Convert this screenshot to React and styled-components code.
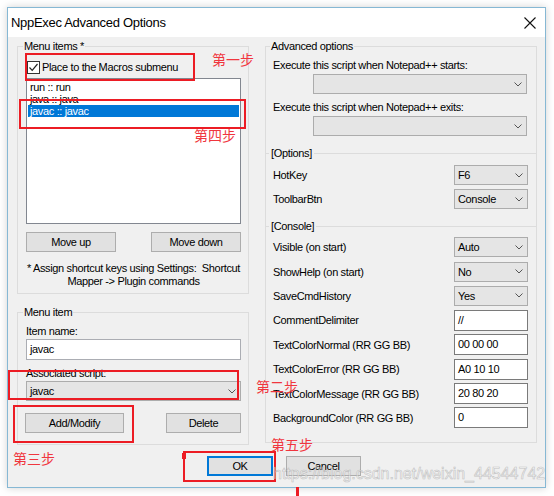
import React from "react";
import styled, { createGlobalStyle } from "styled-components";

const GlobalStyle = createGlobalStyle`
  html, body {
    margin: 0;
    background: #ffffff;
  }
  body {
    font-family: "Liberation Sans", Arial, sans-serif;
  }
`;

const Page = styled.div`
  position: relative;
  width: 554px;
  height: 496px;
  overflow: hidden;
  background: #ffffff;
`;

const Window = styled.div`
  margin: 7px 0 0 7px;
  width: 539px;
  height: 481px;
  box-sizing: border-box;
  border: 1px solid #86b8d4;
  background: #f0f0f0;
  box-shadow: 0 0 8px rgba(0, 0, 0, 0.18);
  display: flex;
  flex-direction: column;
  font-size: 11px;
  letter-spacing: -0.35px;
  color: #000;
`;

const TitleBar = styled.div`
  height: 29px;
  flex-shrink: 0;
  background: #ffffff;
  display: flex;
  align-items: center;
  justify-content: space-between;
  padding: 0 9px 0 3px;
`;

const Title = styled.div`
  font-size: 13px;
  letter-spacing: -0.3px;
`;

const Body = styled.div`
  padding: 3px 0 0 9px;
  display: flex;
  flex-direction: column;
`;

const Columns = styled.div`
  display: grid;
  grid-template-columns: 232px 272px;
  column-gap: 16px;
  align-items: start;
`;

const Column = styled.div`
  display: flex;
  flex-direction: column;
  gap: 12px;
`;

const Group = styled.fieldset`
  margin: 0;
  min-inline-size: 0;
  box-sizing: border-box;
  height: ${(p) => p.$h}px;
  border: 1px solid #dcdcdc;
  padding: ${(p) => p.$pad || "0 7px 0 8px"};
  display: flex;
  flex-direction: column;
`;

const Legend = styled.legend`
  padding: 0 1px;
  margin-left: ${(p) => p.$ml || -3}px;
  line-height: 13px;
`;

const CheckRow = styled.label`
  display: flex;
  align-items: center;
  gap: 2px;
  height: 14px;
  margin: 7px 0 0 1px;
`;

const CheckBox = styled.span`
  width: 13px;
  height: 13px;
  box-sizing: border-box;
  border: 1px solid #333;
  background: #fff;
  display: flex;
  align-items: center;
  justify-content: center;
`;

const ListBox = styled.div`
  margin-top: 4px;
  height: 146px;
  box-sizing: border-box;
  border: 1px solid #828790;
  background: #fff;
  padding: 1px 1px;
`;

const ListRow = styled.div`
  height: 12px;
  line-height: 12px;
  padding-left: 2px;
  background: ${(p) => (p.$selected ? "#0078d7" : "transparent")};
  color: ${(p) => (p.$selected ? "#fff" : "#000")};
  &:first-child {
    margin-top: 1px;
  }
`;

const ButtonRow = styled.div`
  display: flex;
  justify-content: ${(p) => p.$justify || "space-between"};
  gap: ${(p) => p.$gap || 0}px;
  margin-top: ${(p) => p.$mt || 0}px;
  padding-left: ${(p) => p.$pl || 0}px;
`;

const Button = styled.button`
  width: ${(p) => p.$w}px;
  height: 20px;
  box-sizing: border-box;
  border: 1px solid ${(p) => (p.$focused ? "#0078d7" : "#adadad")};
  box-shadow: ${(p) => (p.$focused ? "inset 0 0 0 1px #0078d7" : "none")};
  background: #e1e1e1;
  font-family: inherit;
  font-size: 11px;
  letter-spacing: -0.35px;
  color: #000;
  padding: 0;
`;

const Note = styled.div`
  margin-top: 10px;
  text-align: center;
  line-height: 13px;
  white-space: pre;
`;

const FieldLabel = styled.div`
  line-height: 13px;
  margin-top: ${(p) => p.$mt || 0}px;
`;

const TextInput = styled.div`
  box-sizing: border-box;
  width: ${(p) => p.$w || "100%"};
  height: 21px;
  margin-top: ${(p) => p.$mt || 0}px;
  border: 1px solid ${(p) => p.$border || "#abadb3"};
  background: #fff;
  padding: ${(p) => p.$pad || "0 3px"};
  line-height: ${(p) => p.$lh || 19}px;
  flex-shrink: 0;
`;

const Combo = styled.div`
  box-sizing: border-box;
  width: ${(p) => p.$w || "100%"};
  height: 20px;
  margin: ${(p) => p.$m || "0"};
  border: 1px solid #acacac;
  background: #e5e5e5;
  display: flex;
  align-items: center;
  justify-content: space-between;
  padding: 0 4px 0 3px;
  flex-shrink: 0;
`;

const Section = styled.div`
  display: flex;
  align-items: center;
  gap: 2px;
  margin: ${(p) => p.$m};
  margin-left: -7px;
  margin-right: -8px;
  line-height: 13px;
  &::before {
    content: "";
    width: 3px;
    border-top: 1px solid #dcdcdc;
  }
  &::after {
    content: "";
    flex: 1;
    border-top: 1px solid #dcdcdc;
  }
`;

const OptionRow = styled.div`
  display: flex;
  align-items: center;
  justify-content: space-between;
  height: ${(p) => p.$h || 24.4}px;
  flex-shrink: 0;
  margin-top: ${(p) => p.$mt || 0}px;
`;

const Mark = styled.div`
  position: absolute;
  left: ${(p) => p.$x}px;
  top: ${(p) => p.$y}px;
  width: ${(p) => p.$w}px;
  height: ${(p) => p.$h}px;
  box-sizing: border-box;
  border: ${(p) => (p.$solid ? "none" : "2px solid #ec1c24")};
  background: ${(p) => (p.$solid ? "#ec1c24" : "transparent")};
  pointer-events: none;
`;

const Step = styled.div`
  position: absolute;
  left: ${(p) => p.$x}px;
  top: ${(p) => p.$y}px;
  font-family: "Noto Sans CJK SC", sans-serif;
  font-size: 14px;
  line-height: 16px;
  color: #f0363e;
  pointer-events: none;
`;

const Watermark = styled.div`
  position: absolute;
  left: 273px;
  top: 465px;
  font-family: "Liberation Sans", Arial, sans-serif;
  font-size: 16px;
  color: rgba(255, 255, 255, 0.55);
  -webkit-text-stroke: 0.6px rgba(140, 140, 140, 0.5);
  pointer-events: none;
  white-space: nowrap;
`;

const Chevron = () => (
  <svg width="8" height="5" viewBox="0 0 8 5">
    <polyline points="0.5,0.5 4,4 7.5,0.5" fill="none" stroke="#555" strokeWidth="1" />
  </svg>
);

const Select = ({ value, w, m }) => (
  <Combo $w={w} $m={m}>
    <span>{value}</span>
    <Chevron />
  </Combo>
);

const Close = () => (
  <svg width="12" height="12" viewBox="0 0 12 12">
    <path d="M0.5 0.5 L11.5 11.5 M11.5 0.5 L0.5 11.5" stroke="#111" strokeWidth="1.1" />
  </svg>
);

const optionRows = [
  { label: "HotKey", value: "F6" },
  { label: "ToolbarBtn", value: "Console" },
];

const consoleRows = [
  { label: "Visible (on start)", value: "Auto", select: true },
  { label: "ShowHelp (on start)", value: "No", select: true },
  { label: "SaveCmdHistory", value: "Yes", select: true },
  { label: "CommentDelimiter", value: "//" },
  { label: "TextColorNormal (RR GG BB)", value: "00 00 00" },
  { label: "TextColorError (RR GG BB)", value: "A0 10 10" },
  { label: "TextColorMessage (RR GG BB)", value: "20 80 20" },
  { label: "BackgroundColor (RR GG BB)", value: "0" },
];

const App = () => (
  <Page>
    <GlobalStyle />
    <Window>
      <TitleBar>
        <Title>NppExec Advanced Options</Title>
        <Close />
      </TitleBar>
      <Body>
        <Columns>
          <Column>
            <Group $h={254}>
              <Legend>Menu items *</Legend>
              <CheckRow>
                <CheckBox>
                  <svg width="11" height="11" viewBox="0 0 11 11">
                    <polyline points="1.5,5.5 4.2,8.3 9.5,2" fill="none" stroke="#222" strokeWidth="1.2" />
                  </svg>
                </CheckBox>
                Place to the Macros submenu
              </CheckRow>
              <ListBox>
                <ListRow>run :: run</ListRow>
                <ListRow>java :: java</ListRow>
                <ListRow $selected>javac :: javac</ListRow>
              </ListBox>
              <ButtonRow $mt={8}>
                <Button $w={90}>Move up</Button>
                <Button $w={90}>Move down</Button>
              </ButtonRow>
              <Note>
                {"* Assign shortcut keys using Settings:  Shortcut"}
                <br />
                {"Mapper -> Plugin commands"}
              </Note>
            </Group>
            <Group $h={139}>
              <Legend>Menu item</Legend>
              <FieldLabel $mt={6}>Item name:</FieldLabel>
              <TextInput $mt={1}>javac</TextInput>
              <FieldLabel $mt={7}>Associated script:</FieldLabel>
              <Select value="javac" m="1px 1px 0 0" />
              <ButtonRow $mt={12}>
                <Button $w={99} style={{ marginLeft: -1 }}>Add/Modify</Button>
                <Button $w={75}>Delete</Button>
              </ButtonRow>
            </Group>
          </Column>
          <Column>
            <Group $h={403} $pad="0 8px 0 7px">
              <Legend $ml={-3}>Advanced options</Legend>
              <FieldLabel $mt={6}>Execute this script when Notepad++ starts:</FieldLabel>
              <Select value="" w="214px" m="2px 0 0 40px" />
              <FieldLabel $mt={7}>Execute this script when Notepad++ exits:</FieldLabel>
              <Select value="" w="214px" m="2px 0 0 40px" />
              <Section $m="11px 0 0 0">[Options]</Section>
              {optionRows.map((r, i) => (
                <OptionRow key={r.label} $h={24} $mt={i === 0 ? 3 : 0}>
                  <span>{r.label}</span>
                  <Select value={r.value} w="74px" />
                </OptionRow>
              ))}
              <Section $m="9px 0 0 0">[Console]</Section>
              {consoleRows.map((r, i) => (
                <OptionRow key={r.label} $mt={i === 0 ? 2 : 0}>
                  <span>{r.label}</span>
                  {r.select ? (
                    <Select value={r.value} w="74px" />
                  ) : (
                    <TextInput $w="74px" $border="#7a7a7a" $pad="2px 3px 0" $lh={14}>
                      {r.value}
                    </TextInput>
                  )}
                </OptionRow>
              ))}
            </Group>
          </Column>
        </Columns>
        <ButtonRow $justify="flex-start" $gap={13} $mt={11} $pl={190}>
          <Button $w={66} $focused>OK</Button>
          <Button $w={75}>Cancel</Button>
        </ButtonRow>
      </Body>
    </Window>

    <Mark $x={25} $y={53} $w={170} $h={28} />
    <Mark $x={19} $y={99} $w={227} $h={30} />
    <Mark $x={8} $y={370} $w={231} $h={30} />
    <Mark $x={13} $y={405} $w={121} $h={38} />
    <Mark $x={183} $y={451} $w={93} $h={31} />
    <Mark $solid $x={182} $y={453} $w={4} $h={6} />
    <Mark $solid $x={296} $y={487} $w={3} $h={9} />

    <Step $x={212} $y={51}>第一步</Step>
    <Step $x={194} $y={127}>第四步</Step>
    <Step $x={256} $y={378}>第二步</Step>
    <Step $x={13} $y={450}>第三步</Step>
    <Step $x={271} $y={436}>第五步</Step>

    <Watermark>https://blog.csdn.net/weixin_44544742</Watermark>
  </Page>
);

export default App;
